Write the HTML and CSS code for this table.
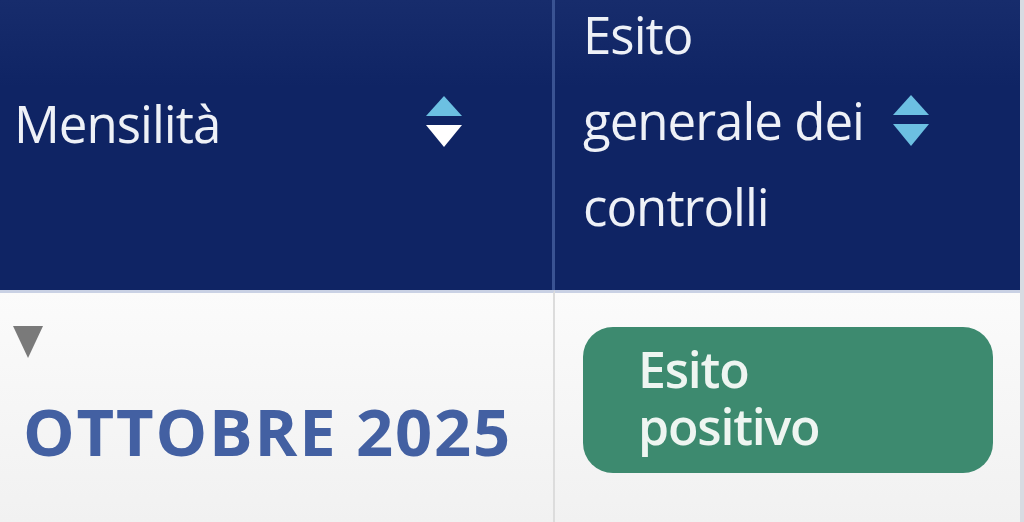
FILE: index.html
```html
<!DOCTYPE html>
<html lang="it">
<head>
<meta charset="utf-8">
<link rel="stylesheet" href="styles.css">
<title>Mensilità</title>
</head>
<body>
<div class="table">
  <div class="th th-first">
    <span class="th-label">Mensilità</span>
    <svg class="sort" width="38" height="54" viewBox="0 0 38 54">
      <polygon points="19,0 37,20 1,20" fill="#6cc0e2"/>
      <polygon points="1,29 37,29 19,51" fill="#ffffff"/>
    </svg>
  </div>
  <div class="th th-second">
    <span class="th-label th-multi">Esito<br>generale dei<br>controlli</span>
    <svg class="sort" width="38" height="54" viewBox="0 0 38 54">
      <polygon points="19,0 37,20 1,20" fill="#6cc0e2"/>
      <polygon points="1,29 37,29 19,51" fill="#6cc0e2"/>
    </svg>
  </div>
  <div class="td td-first">
    <span class="caret"></span>
    <span class="month">OTTOBRE 2025</span>
  </div>
  <div class="td td-second">
    <div class="badge"><span class="badge-line">Esito</span><span class="badge-line">positivo</span></div>
  </div>
</div>
</body>
</html>
```
FILE: styles.css
```css
html, body {
  margin: 0;
  padding: 0;
  background: #f3f3f3;
  width: 1024px;
  height: 522px;
  overflow: hidden;
  font-family: "Open Sans", "Noto Sans", sans-serif;
}
.table {
  display: grid;
  grid-template-columns: 555px 465px;
  grid-template-rows: 290px 232px;
  border-right: 4px solid #d8dbe2;
}
.th {
  background: linear-gradient(#172c6c, #0f2464 30%, #0f2464);
  color: #eef1f7;
  display: flex;
  align-items: center;
  box-sizing: border-box;
  padding-bottom: 44px;
}
.th-first {
  padding-left: 14px;
  padding-right: 89px;
  justify-content: space-between;
  border-right: 3px solid #3a5392;
}
.th-second {
  padding-left: 28px;
  gap: 28px;
}
.th-label {
  font-size: 51px;
  font-weight: 500;
  letter-spacing: -1px;
  line-height: 87px;
}
.th-multi {
  margin-top: -6px;
  line-height: 86px;
}
.sort {
  display: block;
}
.th-second .sort {
  margin-top: -2px;
}
.td {
  background: linear-gradient(#fbfbfb, #f1f1f1);
  border-top: 3px solid #c9d1e4;
  box-sizing: border-box;
}
.td-first {
  border-right: 2px solid #dcdcdc;
  display: flex;
  flex-direction: column;
  padding: 33px 0 0 13px;
}
.caret {
  width: 0;
  height: 0;
  border-left: 15px solid transparent;
  border-right: 15px solid transparent;
  border-top: 32px solid #7a7a7a;
}
.month {
  margin: 41px 0 0 10px;
  font-size: 65px;
  font-weight: 700;
  color: #4360a2;
  letter-spacing: 1.8px;
  line-height: 1;
}
.td-second {
  padding: 34px 0 0 28px;
}
.badge {
  width: 410px;
  height: 146px;
  box-sizing: border-box;
  background: #3d8a6f;
  border-radius: 30px;
  color: #eef5f1;
  font-size: 50px;
  font-weight: 600;
  letter-spacing: -1.2px;
  padding: 14px 0 0 55px;
  display: flex;
  flex-direction: column;
}
.badge-line {
  display: block;
  height: 57px;
  line-height: 57px;
}
```
